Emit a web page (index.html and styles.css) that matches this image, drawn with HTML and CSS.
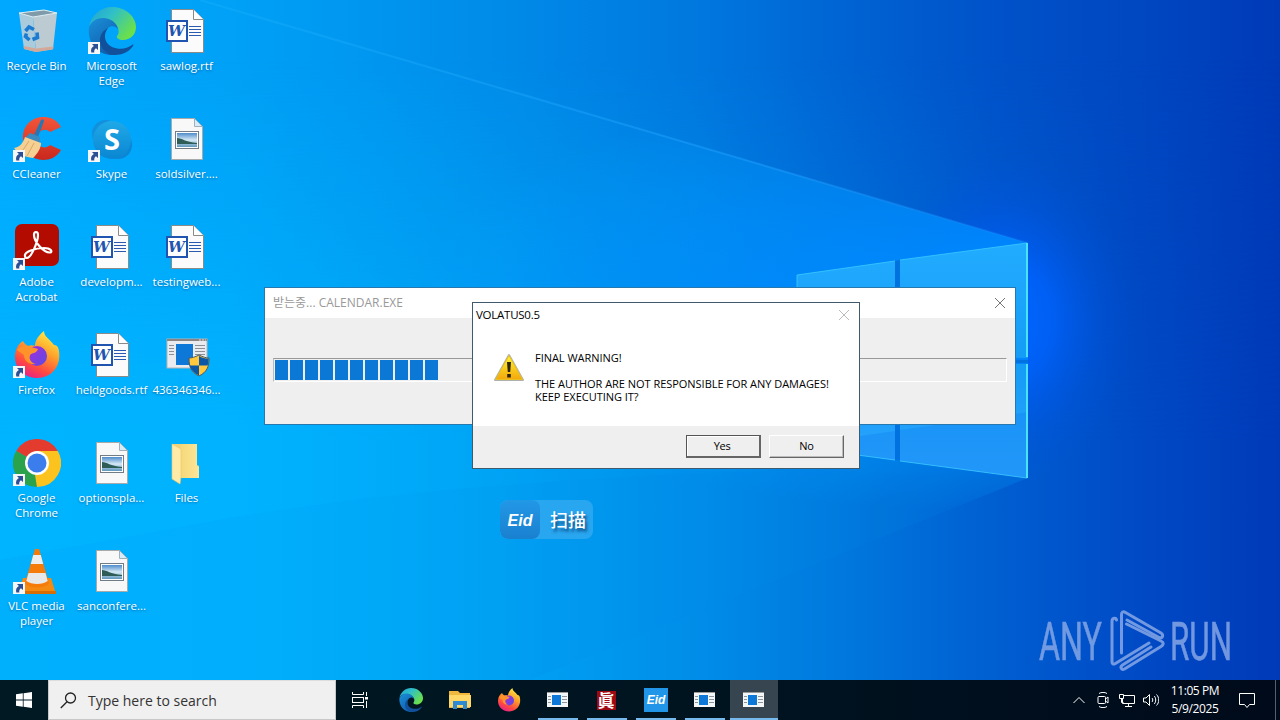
FILE: index.html
```html
<!DOCTYPE html>
<html lang="en">
<head>
    <meta charset="UTF-8">
    <meta name="viewport" content="width=device-width, initial-scale=1.0">
    <title>Desktop</title>
    <link rel="stylesheet" href="styles.css">
</head>
<body>
    <!-- shared icons -->
    <svg class="sprite" width="0" height="0">
        <defs>
            <linearGradient id="edgeGreen" x1="0" y1="0" x2="1" y2="0.6">
                <stop offset="0" stop-color="#219fd6"/><stop offset="0.45" stop-color="#2fc0c8"/><stop offset="1" stop-color="#6be04a"/>
            </linearGradient>
            <linearGradient id="edgeBlue" x1="0" y1="0" x2="0.6" y2="1">
                <stop offset="0" stop-color="#1b8fd8"/><stop offset="1" stop-color="#0f5fae"/>
            </linearGradient>
            <linearGradient id="fox" x1="0.8" y1="0" x2="0.3" y2="1">
                <stop offset="0" stop-color="#fff24a"/><stop offset="0.4" stop-color="#ffa32a"/><stop offset="0.75" stop-color="#ff4a40"/><stop offset="1" stop-color="#e8208a"/>
            </linearGradient>
            <linearGradient id="foxCore" x1="0" y1="0" x2="1" y2="1">
                <stop offset="0" stop-color="#a82be0"/><stop offset="1" stop-color="#5b4be0"/>
            </linearGradient>
            <linearGradient id="skypeBg" x1="0" y1="0" x2="0" y2="1">
                <stop offset="0" stop-color="#1fa9e8"/><stop offset="1" stop-color="#0a86d2"/>
            </linearGradient>
            <linearGradient id="folderFront" x1="0" y1="0" x2="1" y2="0">
                <stop offset="0" stop-color="#f5d879"/><stop offset="1" stop-color="#ffe59a"/>
            </linearGradient>
            <linearGradient id="ccRed" x1="0" y1="0" x2="0" y2="1">
                <stop offset="0" stop-color="#f2553a"/><stop offset="1" stop-color="#c9281c"/>
            </linearGradient>
            <linearGradient id="photo" x1="0" y1="0" x2="0" y2="1">
                <stop offset="0" stop-color="#4f8ccc"/><stop offset="0.5" stop-color="#d5e9f5"/><stop offset="1" stop-color="#5f97bd"/>
            </linearGradient>
            <linearGradient id="warn" x1="0" y1="0" x2="0" y2="1">
                <stop offset="0" stop-color="#fff430"/><stop offset="1" stop-color="#f4a80c"/>
            </linearGradient>
        </defs>
        <symbol id="arrow" viewBox="0 0 12 12">
            <rect width="12" height="12" fill="#f4f6f8"/>
            <path d="M4 2h6v6L8 6.200C6.500 7 6 8.500 6.300 10.500H3.300C2.500 7.500 3.500 5.300 5.900 4z" fill="#2a4f94"/>
        </symbol>
        <symbol id="bin" viewBox="0 0 48 48">
            <path d="M6 6l14 4 3 35-12-3z" fill="#a9cbdc"/>
            <path d="M20 10l24-4-4 36-17 3z" fill="#bccbd2"/>
            <path d="M6 6l25-3 13 3-24 4z" fill="#7f9aa8" stroke="#e3eef3"/>
            <path d="M10.500 39l12.500 2.500 17.500-2-.5 3L23 45l-12-3z" fill="#d3a898"/>
            <g fill="none" stroke="#1a7bd0" stroke-width="3.600"><path d="M12.500 24l3.500-4 5 2.500"/><path d="M24 25.500l.5 5-5 2"/><path d="M16.500 33l-4-3.500 1-3"/></g>
        </symbol>
        <symbol id="edge" viewBox="0 0 48 48">
            <path d="M1 20C3 8 13 0 24 0c14 0 24 10 24 20 0 8-6 13-13 13-4 0-7-2-6-4 2-2 2-5 1-8-3-6-9-9-16-9C8 12 3 15 1 20z" fill="url(#edgeGreen)"/>
            <path d="M1 20c3-6 8-9 14-9 8 0 14 5 15 11-2-3-7-4-10-1-7 6-4 20 9 26-2 .7-4 1-5 1C10 48-1 36 1 20z" fill="url(#edgeBlue)"/>
            <path d="M20 21c-5 6-4 15 4 19 7 3 15 2 20-2 1-1 2 0 1 1-4 6-11 9-18 9-9 0-15-7-15-15 0-6 4-10 8-12z" fill="#12509b"/>
        </symbol>
        <symbol id="word" viewBox="0 0 48 48">
            <path d="M8.500 2.500h22l10 10v33h-32z" fill="#fbfbfc" stroke="#8a8a88"/>
            <path d="M30.500 2.500v10h10" fill="#fff" stroke="#8a8a88"/>
            <path d="M26 19.500h12M26 22.500h12M26 25.500h12M26 28.500h12" stroke="#2a5bb0"/>
            <rect x="4" y="14" width="20" height="20" fill="#fff" stroke="#1f55b0" stroke-width="2"/>
        </symbol>
        <symbol id="image" viewBox="0 0 48 48">
            <path d="M8.500 3.500h23l8 8v33h-31z" fill="#f8f8f8" stroke="#a9a9a9"/>
            <path d="M31.500 3.500v8h8z" fill="#d7ecf8" stroke="#a0b0b8"/>
            <rect x="12.500" y="16.500" width="23" height="17" fill="#fff" stroke="#717c86"/>
            <rect x="14" y="18" width="20" height="14" fill="url(#photo)"/>
            <path d="M14 23c5 0 8 4 20 5v1H14z" fill="#2d5d56"/>
        </symbol>
        <symbol id="ccleaner" viewBox="0 0 48 48">
            <path d="M48 12C43 4 37 2 30 2 18 2 9 12 10 24c1 12 9 21 20 21 7 0 14-3 18-10l-11-5c-5 5-13 2-13-6 0-8 8-12 13-7z" fill="url(#ccRed)"/>
            <path d="M28 5c2-1 3 0 3 1l-6 16-4-2z" fill="#2777b4"/>
            <path d="M17 18l10 4v7l-15-6z" fill="#3a8bc2"/>
            <path d="M12 22l16 6c0 5-3 10-8 15-9-1-15-4-19-10 6-1 9-5 11-11z" fill="#f6cf92"/>
            <path d="M8 38l8-12M14 41l7-13" stroke="#d9a866"/>
        </symbol>
        <symbol id="skype" viewBox="0 0 48 48">
            <circle cx="18" cy="19" r="14" fill="#1290dc"/><circle cx="30" cy="30" r="14" fill="#0b86d4"/>
            <circle cx="24" cy="25" r="19" fill="url(#skypeBg)"/>
        </symbol>
        <symbol id="acrobat" viewBox="0 0 48 48">
            <rect x="2" y="1" width="44" height="42" rx="7" fill="#b30b00"/>
            <path d="M12 33c-1-4 10-8 19-8 7 0 9 4 6 4.500C31 30 21 19 21 12c0-4 4-4 4 0 0 7-7 23-11 23-1 0-2-1-2-2z" fill="none" stroke="#fff" stroke-width="2.200"/>
        </symbol>
        <symbol id="firefox" viewBox="0 0 48 48">
            <path d="M10 10c1 2 3 4 5 5 2-1 5-1 7 0 0-6 4-11 9-15 0 6 6 8 10 14 5-1 6 8 5 15-2 11-11 18-22 18C12 47 2 38 2 26c0-7 3-13 8-16z" fill="url(#fox)"/>
            <circle cx="24" cy="25" r="10" fill="url(#foxCore)"/>
            <path d="M4 19c4-5 10-5 14-3l7 2c-1 4-5 4-7 5-3 3-1 9 5 10-8 1-12-4-12-9-2-2-5-3-7-5z" fill="#ff932a"/>
        </symbol>
        <symbol id="chrome" viewBox="0 0 48 48">
            <path d="M24 24L3.200 12A24 24 0 0 1 44.800 12z" fill="#e33b2e"/>
            <path d="M24 24l20.800-12A24 24 0 0 1 24 48z" fill="#fcc31e"/>
            <path d="M24 24v24A24 24 0 0 1 3.200 12z" fill="#2ba24c"/>
            <path d="M24 12h20.800l-6 10H24zM34.400 30L24 48l-2-12z" fill="#fcc31e"/>
            <circle cx="24" cy="24" r="12" fill="#fff"/><circle cx="24" cy="24" r="9.500" fill="#3b7ded"/>
        </symbol>
        <symbol id="vlc" viewBox="0 0 48 48">
            <path d="M10 31h28l5 16H5z" fill="#f58a12"/>
            <path d="M6 44h37v3H5z" fill="#d96d05"/>
            <path d="M22 2h4l10 34c-3 6-21 6-24 0z" fill="#f57c0a"/>
            <path d="M20.200 8h7.600l2.400 9h-12.400z" fill="#eee"/>
            <path d="M15.500 26h17l2.200 8c-5 4-16 4-21.400 0z" fill="#e8e8e8"/>
        </symbol>
        <symbol id="app" viewBox="0 0 48 48">
            <rect x="4" y="8" width="40" height="29" fill="#e9ebee" stroke="#b5b5b5"/>
            <path d="M4 9h40" stroke="#8d8585" stroke-width="2"/><path d="M36 9h7" stroke="#ddd" stroke-width="1" stroke-dasharray="2 1"/>
            <path d="M6 14.500h5M6 17.500h5M6 20.500h5M6 23.500h5M32 14.500h10M32 17.500h10M32 20.500h10M32 23.500h10" stroke="#8b8f96"/>
            <rect x="13" y="13" width="17" height="21" fill="#0d78d7"/>
            <path d="M36 24c4 2 7 3 10 3 0 9-2 14-10 18-8-4-10-9-10-18 3 0 6-1 10-3z" fill="#ffc83d" stroke="#4c5a66"/>
            <path d="M36 34.500h9.500c-1.500 4.500-4.500 7.500-9.500 10zM36 34.500V25c-3 2-6 2.500-9.500 2.500 0 3 0 5 1 7z" fill="#0b57a6" transform="matrix(-1 0 0 1 72 0)"/>
        </symbol>
        <symbol id="folder" viewBox="0 0 48 48">
            <path d="M9 5h25v21l2 1v11H15z" fill="#f3d27a"/>
            <path d="M18 5h16v22l2 1v11H18z" fill="url(#folderFront)"/>
            <path d="M9 5l9 5v28l-1 7-8-5z" fill="#ffeaa7" stroke="#e8c66b" stroke-width=".6"/>
        </symbol>
        <symbol id="miniapp" viewBox="0 0 24 24">
            <path d="M2 5h21v14H2z" fill="#f4f6f8"/><path d="M2 4.500h21" stroke="#9a9a9a"/>
            <path d="M3 8.500h3M3 11.500h3M3 14.500h3M17 8.500h5M17 11.500h5M17 14.500h5" stroke="#8d949c"/>
            <rect x="7" y="7" width="9" height="10" fill="#0d78d7"/>
        </symbol>
        <symbol id="explorer" viewBox="0 0 24 24">
            <path d="M1 3h9l2 2h10v15H1z" fill="#f0b73f"/><path d="M1 7h22v12H1z" fill="#ffd767"/>
            <path d="M5 21v-8h14v8h-4v-4H9v4z" fill="#2e8bd2"/>
        </symbol>
        <symbol id="close" viewBox="0 0 12 12">
            <path d="M1 1l10 10M11 1L1 11" fill="none" stroke="currentColor" stroke-width="1"/>
        </symbol>
    </svg>

    <div class="desktop">
        <svg class="wallpaper" viewBox="0 0 1280 680" width="1280" height="680">
            <defs>
                <linearGradient id="sky" gradientUnits="userSpaceOnUse" x1="0" y1="0" x2="1280" y2="0">
                    <stop offset="0" stop-color="#00a9ff"/><stop offset="0.18" stop-color="#00a1f6"/><stop offset="0.4" stop-color="#008ae8"/>
                    <stop offset="0.55" stop-color="#0077de"/><stop offset="0.67" stop-color="#0062d2"/><stop offset="0.77" stop-color="#0053ca"/>
                    <stop offset="0.9" stop-color="#0046c1"/><stop offset="1" stop-color="#003ab7"/>
                </linearGradient>
                <!-- brighter version of the sky, faded in towards the bottom -->
                <linearGradient id="low" gradientUnits="userSpaceOnUse" x1="0" y1="0" x2="1280" y2="0">
                    <stop offset="0" stop-color="#00b6ff"/><stop offset="0.18" stop-color="#00b4ff"/><stop offset="0.3" stop-color="#00acfa"/><stop offset="0.4" stop-color="#00a2f4"/>
                    <stop offset="0.55" stop-color="#008ce8"/><stop offset="0.67" stop-color="#0076dc"/><stop offset="0.77" stop-color="#0060d2"/>
                    <stop offset="0.9" stop-color="#0048c4"/><stop offset="1" stop-color="#003ab8"/>
                </linearGradient>
                <linearGradient id="fade" gradientUnits="userSpaceOnUse" x1="0" y1="60" x2="0" y2="440">
                    <stop offset="0" stop-color="#000"/><stop offset="1" stop-color="#fff"/>
                </linearGradient>
                <mask id="fadeMask"><rect width="1280" height="680" fill="url(#fade)"/></mask>
                <radialGradient id="glow" gradientUnits="userSpaceOnUse" cx="0" cy="0" r="1" gradientTransform="translate(1005 320) scale(130 165)">
                    <stop offset="0" stop-color="#0068ff"/><stop offset="0.35" stop-color="#0062ff" stop-opacity=".8"/><stop offset="0.7" stop-color="#0058ec" stop-opacity=".3"/><stop offset="1" stop-color="#0050dc" stop-opacity="0"/>
                </radialGradient>
                <radialGradient id="beam" gradientUnits="userSpaceOnUse" cx="0" cy="0" r="1" gradientTransform="translate(960 300) scale(560 210)">
                    <stop offset="0" stop-color="#0088ff"/><stop offset="0.35" stop-color="#008aff" stop-opacity=".8"/><stop offset="0.7" stop-color="#0094ff" stop-opacity=".4"/><stop offset="1" stop-color="#00a0ff" stop-opacity="0"/>
                </radialGradient>
                <linearGradient id="ray" gradientUnits="userSpaceOnUse" x1="200" y1="0" x2="1028" y2="243">
                    <stop offset="0" stop-color="#20b4ff" stop-opacity=".3"/><stop offset="0.7" stop-color="#20a0ff" stop-opacity=".5"/><stop offset="1" stop-color="#2090ff" stop-opacity=".2"/>
                </linearGradient>
                <linearGradient id="pane" gradientUnits="userSpaceOnUse" x1="0" y1="243" x2="0" y2="478">
                    <stop offset="0" stop-color="#22acff"/><stop offset="0.5" stop-color="#149cf6"/><stop offset="1" stop-color="#2ca4ff"/>
                </linearGradient>
            </defs>
            <rect width="1280" height="680" fill="url(#sky)"/>
            <rect width="1280" height="680" fill="url(#low)" mask="url(#fadeMask)"/>
            <rect width="1280" height="680" fill="url(#glow)"/>
            <path d="M200 0L1028 243V478L530 680H0V0z" fill="url(#beam)"/>
            <path d="M200 0L1028 243V478L530 680H0V0z" fill="#00a0ff" opacity=".08"/>
            <path d="M230 518Q450 480 797 470L1028 478 530 680H0V560z" fill="#0078d0" opacity=".05"/>
            <path d="M200 0L1028 243" stroke="url(#ray)" stroke-width="2"/>
            <path d="M895 261V460H900V260zM797 356L1028 360v3L797 361z" fill="#0072e0"/>
            <path d="M797 275L895 261V355L797 354zM900 260L1028 243V358L900 355zM797 363H895V460L797 447zM900 363L1028 364V478L900 461z" fill="url(#pane)"/>
            <path d="M797 445L895 431V460L797 447zM900 430L1028 412V478L900 461z" fill="#0a78ec" opacity=".28"/>
            <path d="M797 356V275L895 261M900 260L1027 243M1027 478L900 461M895 460L797 447" fill="none" stroke="#3ccaff" opacity=".8"/>
            <path d="M1027 243V357M1027 364V478" stroke="#48e4ff" stroke-width="2"/>
        </svg>

        <div class="icons">
            <div class="icon"><svg><use href="#bin"/></svg><span>Recycle Bin</span></div>
            <div class="icon"><svg><use href="#ccleaner"/></svg><svg class="shortcut"><use href="#arrow"/></svg><span>CCleaner</span></div>
            <div class="icon"><svg><use href="#acrobat"/></svg><svg class="shortcut"><use href="#arrow"/></svg><span>Adobe<br>Acrobat</span></div>
            <div class="icon"><svg><use href="#firefox"/></svg><svg class="shortcut"><use href="#arrow"/></svg><span>Firefox</span></div>
            <div class="icon"><svg><use href="#chrome"/></svg><svg class="shortcut"><use href="#arrow"/></svg><span>Google<br>Chrome</span></div>
            <div class="icon"><svg><use href="#vlc"/></svg><svg class="shortcut"><use href="#arrow"/></svg><span>VLC media<br>player</span></div>

            <div class="icon"><svg><use href="#edge"/></svg><svg class="shortcut"><use href="#arrow"/></svg><span>Microsoft<br>Edge</span></div>
            <div class="icon"><svg><use href="#skype"/></svg><b class="skype-letter">S</b><svg class="shortcut"><use href="#arrow"/></svg><span>Skype</span></div>
            <div class="icon"><svg><use href="#word"/></svg><b class="word-letter">W</b><span>developm...</span></div>
            <div class="icon"><svg><use href="#word"/></svg><b class="word-letter">W</b><span>heldgoods.rtf</span></div>
            <div class="icon"><svg><use href="#image"/></svg><span>optionspla...</span></div>
            <div class="icon"><svg><use href="#image"/></svg><span>sanconfere...</span></div>

            <div class="icon"><svg><use href="#word"/></svg><b class="word-letter">W</b><span>sawlog.rtf</span></div>
            <div class="icon"><svg><use href="#image"/></svg><span>soldsilver....</span></div>
            <div class="icon"><svg><use href="#word"/></svg><b class="word-letter">W</b><span>testingweb...</span></div>
            <div class="icon"><svg><use href="#app"/></svg><span>436346346...</span></div>
            <div class="icon"><svg><use href="#folder"/></svg><span>Files</span></div>
        </div>

        <div class="window download">
            <div class="titlebar">
                <span>받는중... CALENDAR.EXE</span>
                <svg class="close"><use href="#close"/></svg>
            </div>
            <div class="progress">
                <i></i><i></i><i></i><i></i><i></i><i></i><i></i><i></i><i></i><i></i><i></i>
            </div>
        </div>

        <div class="window dialog">
            <div class="titlebar">
                <span>VOLATUS0.5</span>
                <svg class="close"><use href="#close"/></svg>
            </div>
            <div class="message">
                <svg class="warning" viewBox="0 0 32 32">
                    <path d="M16 3L30 28H2z" fill="#c2c2c2" stroke="#b0b0b0" stroke-width="2" stroke-linejoin="round"/>
                    <path d="M16 3.500L29.500 27.500H2.500z" fill="url(#warn)" stroke="#e8c020" stroke-linejoin="round"/>
                    <path d="M14 10h4l-.8 10h-2.400z" fill="#2a2410"/><rect x="14.200" y="22" width="3.600" height="3.500" fill="#2a2410"/>
                </svg>
                <p>FINAL WARNING!<br><br>THE AUTHOR ARE NOT RESPONSIBLE FOR ANY DAMAGES!<br>KEEP EXECUTING IT?</p>
            </div>
            <div class="buttons">
                <button class="default">Yes</button>
                <button>No</button>
            </div>
        </div>

        <div class="scan">
            <div class="scan-logo">Eid</div>
            <div class="scan-label">扫描</div>
        </div>

        <svg class="watermark" viewBox="0 0 200 70" width="200" height="70">
            <text x="3" y="54.500" textLength="63" lengthAdjust="spacingAndGlyphs">ANY</text>
            <text x="134" y="54.500" textLength="62" lengthAdjust="spacingAndGlyphs">RUN</text>
            <g fill="none" stroke-width="3" stroke-linejoin="round" stroke-linecap="round">
                <path d="M80.500 15c0-3-4.500-2-4.500 1V57c0 2 1.500 2.500 3 1.700L113 38"/>
                <path d="M85.500 48V9.500c0-2.500 1.500-3.500 4-2L125 28c3 2 1.500 6-2 4.500L91 15"/>
                <path d="M90.500 19L125 36c3 1.500 3 3.500 0 5.500L88.500 64c-3 1.500-5-2-2-4L115 42"/>
            </g>
        </svg>
    </div>

    <div class="taskbar">
        <div class="start">
            <svg viewBox="0 0 16 16" width="16" height="16"><path d="M0 2.300L6.800 1.300V7.600H0zM7.600 1.200L16 0V7.600H7.600zM0 8.400H6.800V14.700L0 13.700zM7.600 8.400H16V16L7.600 14.800z" fill="#fff"/></svg>
        </div>
        <div class="search">
            <svg viewBox="0 0 17 17" width="17" height="17"><circle cx="10.500" cy="6" r="5" fill="none" stroke="#222" stroke-width="1.300"/><path d="M7 9.700L.8 16" stroke="#222" stroke-width="1.300"/></svg>
            <span>Type here to search</span>
        </div>
        <div class="taskview">
            <svg viewBox="0 0 17 16" width="17" height="16" fill="none" stroke="#fff"><path d="M.5 0v2.500h11V0M.5 16v-2.500h11V16"/><rect x=".5" y="5.500" width="11" height="5"/><path d="M14.500 0v4M14.500 9v7"/><rect x="13" y="5" width="3" height="2.500" fill="#fff" stroke="none"/></svg>
        </div>
        <div class="tasks">
            <div class="task"><svg><use href="#edge"/></svg></div>
            <div class="task"><svg><use href="#explorer"/></svg></div>
            <div class="task"><svg><use href="#firefox"/></svg></div>
            <div class="task open"><svg><use href="#miniapp"/></svg></div>
            <div class="task open"><div class="hanja">眞</div></div>
            <div class="task open"><div class="eid">Eid</div></div>
            <div class="task open"><svg><use href="#miniapp"/></svg></div>
            <div class="task open active"><svg><use href="#miniapp"/></svg></div>
        </div>
        <div class="tray">
            <svg viewBox="0 0 16 16"><path d="M2.500 11L8 5.500l5.500 5.500"/></svg>
            <svg viewBox="0 0 16 16"><rect x="3" y="4.500" width="7.500" height="7" rx="1"/><path d="M10.500 7l2.500-2v6l-2.500-2M4 1.500c2-1.500 6-1.500 8 0M4 14.500c2 1.500 6 1.500 8 0"/></svg>
            <svg viewBox="0 0 16 16"><path d="M5 3.500h10.500v8H3.500V7M9.500 11.500v3M6 14.500h7M.5 2.500h4v4h-4zM2.500 6.500v4h2"/></svg>
            <svg viewBox="0 0 16 16"><path d="M.5 6h2.500l3.500-3.500v11L3 10H.5zM9 6c1 1 1 3 0 4M11.200 4c2 2 2 6 0 8M13.500 2.500c3 3 3 8 0 11"/></svg>
        </div>
        <div class="clock"><span>11:05 PM</span><span>5/9/2025</span></div>
        <svg class="notify" viewBox="0 0 18 18"><path d="M1.500 2.500h15v11h-5l-2.500 3-2.500-3h-5z"/></svg>
        <div class="peek"></div>
    </div>
</body>
</html>
```
FILE: styles.css
```css
* {
    box-sizing: border-box;
}
body {
    margin: 0;
    width: 1280px;
    height: 720px;
    overflow: hidden;
    display: flex;
    flex-direction: column;
    font-family: "Open Sans", "Noto Sans", "Noto Sans CJK KR", sans-serif;
    font-size: 12px;
}
.sprite {
    position: absolute;
}
.desktop {
    position: relative;
    height: 680px;
    background: #0090f0;
}
.wallpaper {
    position: absolute;
    left: 0;
    top: 0;
}

/* desktop icons */
.icons {
    position: relative;
    display: grid;
    grid-auto-flow: column;
    grid-template-rows: repeat(6, 108px);
    grid-auto-columns: 75px;
    justify-content: start;
    margin-left: -1px;
    padding-top: 7px;
}
.icon {
    position: relative;
    display: flex;
    flex-direction: column;
    align-items: center;
    color: #fff;
    line-height: 15px;
    font-size: 11.5px;
    text-align: center;
    white-space: nowrap;
    text-shadow: 0 1px 2px rgba(0, 50, 110, 0.5);
}
.icon svg {
    width: 48px;
    height: 48px;
    margin-bottom: 3px;
}
.icon .shortcut {
    position: absolute;
    left: 14px;
    top: 35px;
    width: 12px;
    height: 12px;
}
.word-letter {
    position: absolute;
    left: 17px;
    top: 14px;
    width: 20px;
    font: italic bold 15px/20px "DejaVu Serif", serif;
    letter-spacing: -1px;
    color: #1f55b0;
    text-shadow: none;
}
.skype-letter {
    position: absolute;
    left: 28px;
    top: 10px;
    width: 20px;
    font: bold 29px/28px "Open Sans", sans-serif;
    text-shadow: none;
}

/* windows */
.window {
    position: absolute;
    display: flex;
    flex-direction: column;
}
.titlebar {
    display: flex;
    align-items: center;
    justify-content: space-between;
    background: #fff;
}
.titlebar span {
    padding-bottom: 2px;
}
.close {
    width: 12px;
    height: 12px;
}
.download {
    left: 264px;
    top: 287px;
    width: 752px;
    height: 138px;
    background: #efefef;
    border: 1px solid #2878b0;
}
.download .titlebar {
    height: 30px;
    padding: 0 9px 0 8px;
    color: #999;
}
.download .close {
    color: #777;
}
.progress {
    display: flex;
    gap: 2px;
    height: 24px;
    margin: 40px 8px 0;
    padding: 1px;
    border: 1px solid #fff;
    border-top-color: #999;
    border-left-color: #bbb;
}
.progress i {
    width: 13px;
    background: #0b78d6;
}
.dialog {
    left: 472px;
    top: 302px;
    width: 388px;
    height: 167px;
    background: #fff;
    border: 1px solid #3f5a6c;
    font-size: 11px;
}
.dialog .titlebar {
    height: 24px;
    padding: 0 9px 0 3px;
    font-size: 11.5px;
    letter-spacing: -0.25px;
}
.dialog .close {
    color: #bbb;
}
.message {
    display: flex;
    gap: 10px;
    height: 99px;
    padding: 24px 0 0 20px;
}
.message p {
    margin: 0;
    line-height: 13px;
    letter-spacing: -0.03px;
    white-space: nowrap;
}
.warning {
    width: 32px;
    height: 32px;
    margin-top: 1px;
}
.buttons {
    flex: 1;
    display: flex;
    justify-content: flex-end;
    gap: 8px;
    padding: 9px 15px 0 0;
    background: #efefef;
}
.buttons button {
    width: 75px;
    height: 23px;
    padding: 0 0 2px;
    font: 11px "Open Sans", sans-serif;
    letter-spacing: -0.3px;
    color: #000;
    background: #efefef;
    border: 1px solid #fff;
    border-right-color: #666;
    border-bottom-color: #666;
    box-shadow: inset -1px -1px #bbb;
}
.buttons .default {
    padding: 0 2px 1px 0;
    border: 1px solid #555;
    border-right: 2px solid #666;
    border-bottom: 2px solid #666;
    box-shadow: inset 1px 1px #fff;
}

/* scan widget */
.scan {
    position: absolute;
    left: 500px;
    top: 500px;
    width: 93px;
    height: 39px;
    display: flex;
    border-radius: 8px;
    background: #28a6f0;
    color: #fff;
    overflow: hidden;
}
.scan-logo {
    width: 40px;
    border-radius: 8px;
    background: linear-gradient(#2298e6, #1a80d0);
    font: italic bold 16px/41px "Liberation Sans", sans-serif;
    text-align: center;
}
.scan-label {
    flex: 1;
    padding-left: 10px;
    font: 500 18px/39px "Noto Sans CJK SC", sans-serif;
    text-shadow: 2px 3px 3px rgba(0, 40, 90, 0.7);
}
.watermark {
    position: absolute;
    left: 1036px;
    top: 605px;
    overflow: visible;
    fill: #86a7e6;
    stroke: #86a7e6;
    opacity: 0.85;
}
.watermark text {
    font: 400 53px Roboto, sans-serif;
    stroke-width: 0.6px;
}

/* taskbar */
.taskbar {
    height: 40px;
    display: flex;
    align-items: stretch;
    background: linear-gradient(90deg, #001923, #001420 55%, #000a1a);
    color: #fff;
}
.start, .taskview {
    width: 48px;
    display: flex;
    align-items: center;
    justify-content: center;
}
.search {
    width: 288px;
    display: flex;
    align-items: center;
    gap: 11px;
    padding-left: 11px;
    background: #f0f0f0;
    border: 1px solid #c8c8c8;
    border-top-color: #ddd;
    color: #333;
    font-size: 14px;
}
.tasks {
    display: flex;
    gap: 1px;
    padding-left: 3px;
}
.task {
    width: 48px;
    display: flex;
    align-items: center;
    justify-content: center;
}
.task svg {
    width: 24px;
    height: 24px;
}
.open {
    padding-right: 2px;
    background: linear-gradient(#76b9ed, #76b9ed) center bottom / 40px 2px no-repeat;
}
.active {
    background-color: #36454f;
    background-size: 48px 2px;
}
.hanja {
    width: 19px;
    height: 19px;
    background: #a00812;
    font: bold 17px/18px "Noto Sans CJK KR", sans-serif;
    text-align: center;
}
.eid {
    width: 24px;
    height: 24px;
    margin-left: 2px;
    background: #2196e8;
    font: italic bold 12px/24px "Liberation Sans", sans-serif;
    text-align: center;
}
.tray {
    display: flex;
    align-items: center;
    gap: 8px;
    margin-left: auto;
    fill: none;
    stroke: #fff;
}
.tray svg {
    width: 16px;
    height: 16px;
}
.clock {
    width: 72px;
    display: flex;
    flex-direction: column;
    align-items: center;
    padding-top: 2px;
    line-height: 18px;
    letter-spacing: -0.4px;
}
.notify {
    width: 18px;
    height: 18px;
    margin: 11px 19px 0 7px;
    fill: none;
    stroke: #fff;
}
.peek {
    width: 5px;
    border-left: 1px solid #56606c;
}
```
